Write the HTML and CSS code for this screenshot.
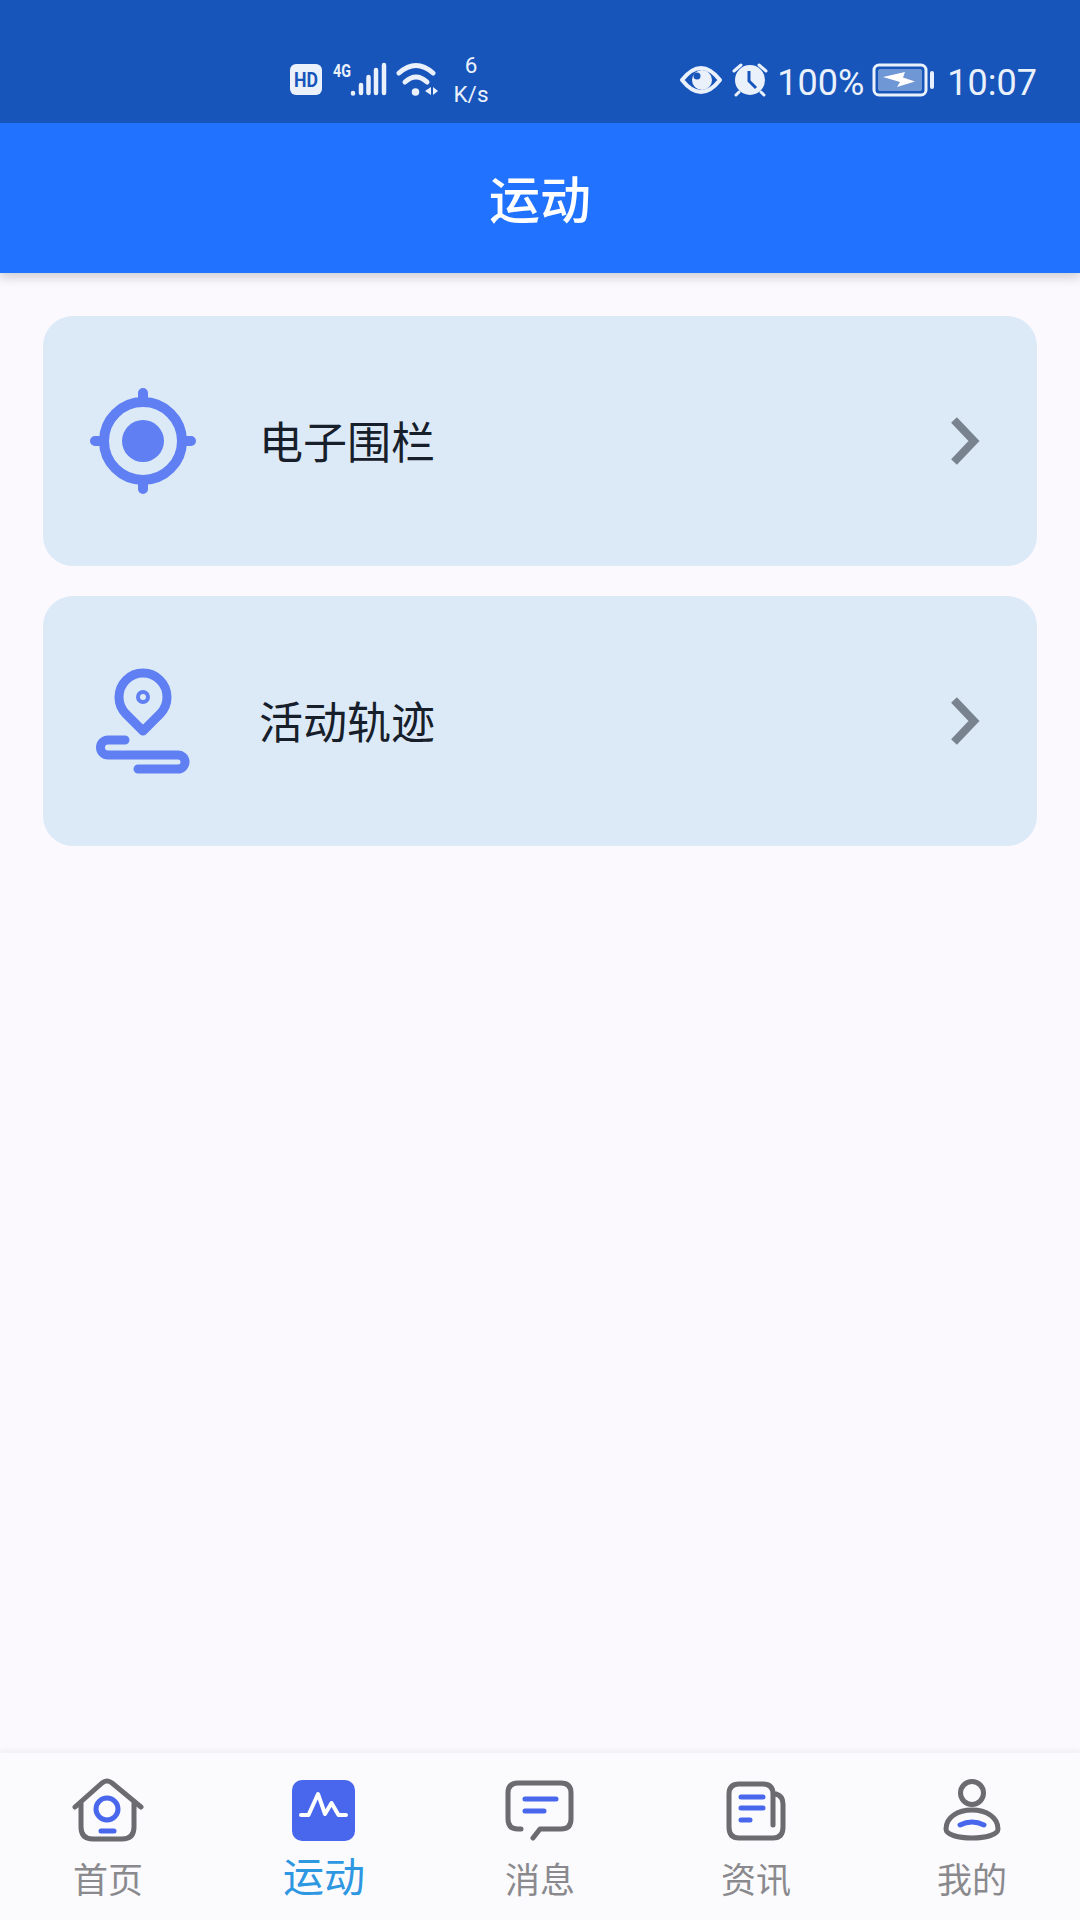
FILE: index.html
```html
<!DOCTYPE html>
<html lang="zh">
<head>
<meta charset="utf-8">
<title>运动</title>
<link rel="stylesheet" href="styles.css">
</head>
<body>
<div class="screen">
  <header class="header">
    <div class="status">
      <div class="status-left">
        <svg class="ic" width="32" height="32" viewBox="290 65 32 32"><rect x="290" y="65" width="32" height="31" rx="6" fill="#EAF1FB"/><text x="294" y="88" class="hd" textLength="24" lengthAdjust="spacingAndGlyphs">HD</text></svg>
        <svg class="ic net" width="54" height="44" viewBox="333 58 54 44"><text x="333" y="77" class="g4" textLength="18" lengthAdjust="spacingAndGlyphs">4G</text><g stroke="#EAF1FB" stroke-width="4.500" stroke-linecap="round"><path d="M353 93v.5M361 85v8M368.500 77v16M376 70v23M384 65v28"/></g></svg>
        <svg class="ic wifi" width="44" height="36" viewBox="395 62 44 36"><g fill="none" stroke="#EAF1FB" stroke-width="5" stroke-linecap="round"><path d="M399 73Q416 58 433 73"/><path d="M405 82Q416 72 427 82"/></g><circle cx="415.500" cy="92" r="3.800" fill="#EAF1FB"/><path d="M431 87v8l-6-4zM433 87v8l5-4z" fill="#EAF1FB"/></svg>
        <div class="speed"><span>6</span><span>K/s</span></div>
      </div>
      <div class="status-right">
        <svg class="ic" width="44" height="30" viewBox="679 64 44 30"><path d="M682 79Q701 55 720 79Q701 103 682 79Z" fill="none" stroke="#EAF1FB" stroke-width="4" stroke-linejoin="round"/><circle cx="702" cy="79" r="10" fill="#EAF1FB"/><circle cx="697" cy="75" r="3.500" fill="#1755BB"/></svg>
        <svg class="ic alarm" width="36" height="36" viewBox="733 62 36 36"><circle cx="751" cy="80" r="15" fill="#EAF1FB"/><path d="M750 71v10l7 7" fill="none" stroke="#1755BB" stroke-width="3"/><g stroke="#EAF1FB" stroke-width="3" stroke-linecap="round"><path d="M735 71l7-6M767 71l-7-6M737 95l3-3M765 95l-3-3"/></g></svg>
        <span class="pct">100%</span>
        <svg class="ic batt" width="64" height="34" viewBox="872 64 64 34"><rect x="874" y="66" width="52" height="30" rx="5" fill="none" stroke="#EAF1FB" stroke-width="3"/><rect x="878" y="70" width="44" height="22" rx="2" fill="#EAF1FB" fill-opacity=".42"/><path d="M883 78L905 73L903 78.500L915 82.500L897 88L900 83Z" fill="#fff"/><rect x="930" y="72" width="4" height="18" rx="2" fill="#EAF1FB"/></svg>
        <span class="time">10:07</span>
      </div>
    </div>
    <div class="appbar">运动</div>
  </header>

  <main class="list">
    <div class="card">
      <svg class="card-icon" width="120" height="120" viewBox="83 381 120 120">
        <g fill="none" stroke="#5F7FF2" stroke-width="10" stroke-linecap="round">
          <circle cx="143" cy="441" r="39"/>
          <path d="M143 393v5M143 484v5M95 441h5M186 441h5"/>
        </g>
        <circle cx="143" cy="441" r="21" fill="#5F7FF2"/>
      </svg>
      <span class="card-label">电子围栏</span>
      <svg class="chev" width="36" height="52" viewBox="0 0 36 52"><path d="M7 5L27 26L7 47" fill="none" stroke="#78838F" stroke-width="8"/></svg>
    </div>
    <div class="card">
      <svg class="card-icon" width="120" height="120" viewBox="83 661 120 120">
        <g fill="none" stroke="#5F7FF2" stroke-linecap="round" stroke-linejoin="round">
          <path stroke-width="9" d="M143 731L126 714A24 24 0 1 1 160 714Z"/>
          <circle cx="143" cy="697" r="5" stroke-width="4"/>
          <path stroke-width="9" d="M125 740H108A7.500 7.500 0 0 0 108 755H178A7 7 0 0 1 178 769H138"/>
        </g>
      </svg>
      <span class="card-label">活动轨迹</span>
      <svg class="chev" width="36" height="52" viewBox="0 0 36 52"><path d="M7 5L27 26L7 47" fill="none" stroke="#78838F" stroke-width="8"/></svg>
    </div>
  </main>

  <nav class="tabs">
    <div class="tab">
      <svg class="tab-icon" width="80" height="66" viewBox="68 1777 80 66">
        <path d="M75 1807L102 1783Q107 1779 112 1783L141 1807M81 1802V1827Q81 1839 93 1839H122Q134 1839 134 1827V1802" fill="none" stroke="#6B6B70" stroke-width="5" stroke-linecap="round" stroke-linejoin="round"/>
        <circle cx="107" cy="1809" r="11" fill="none" stroke="#4867EC" stroke-width="5"/>
        <path d="M101 1831H114" stroke="#4867EC" stroke-width="5" stroke-linecap="round"/>
      </svg>
      <span class="tab-label">首页</span>
    </div>
    <div class="tab">
      <svg class="tab-icon" width="80" height="66" viewBox="284 1777 80 66">
        <rect x="292" y="1780" width="63" height="61" rx="10" fill="#4867EC"/>
        <path d="M301 1815H308.500L318 1794L325 1814L331.500 1803L338.500 1815H346" fill="none" stroke="#fff" stroke-width="4" stroke-linecap="round" stroke-linejoin="round"/>
      </svg>
      <span class="tab-label active">运动</span>
    </div>
    <div class="tab">
      <svg class="tab-icon" width="80" height="66" viewBox="500 1777 80 66">
        <path d="M521 1829H518Q508 1829 508 1819V1793Q508 1783 518 1783H561Q571 1783 571 1793V1819Q571 1829 561 1829H540L533 1838" fill="none" stroke="#6B6B70" stroke-width="5" stroke-linecap="round" stroke-linejoin="round"/>
        <path d="M525 1799H556M525 1811H544" stroke="#4867EC" stroke-width="5" stroke-linecap="round"/>
      </svg>
      <span class="tab-label">消息</span>
    </div>
    <div class="tab">
      <svg class="tab-icon" width="80" height="66" viewBox="716 1777 80 66">
        <path d="M773 1825V1794Q773 1784 763 1784H739Q729 1784 729 1794V1827Q729 1838 739 1838H773Q783 1838 783 1827V1804Q783 1796 776 1794" fill="none" stroke="#6B6B70" stroke-width="5" stroke-linecap="round" stroke-linejoin="round"/>
        <path d="M741 1797H763M741 1808H763M741 1820H750" stroke="#4867EC" stroke-width="5" stroke-linecap="round"/>
      </svg>
      <span class="tab-label">资讯</span>
    </div>
    <div class="tab">
      <svg class="tab-icon" width="80" height="66" viewBox="932 1777 80 66">
        <circle cx="972" cy="1793" r="11.500" fill="none" stroke="#6B6B70" stroke-width="5"/>
        <path d="M946 1829C946 1817 958 1810 972 1810C986 1810 998 1817 998 1829C998 1835 985 1838 972 1838C959 1838 946 1835 946 1829Z" fill="none" stroke="#6B6B70" stroke-width="5"/>
        <path d="M960 1825Q972 1819 984 1825" fill="none" stroke="#4867EC" stroke-width="5" stroke-linecap="round"/>
      </svg>
      <span class="tab-label">我的</span>
    </div>
  </nav>
</div>
</body>
</html>
```

FILE: styles.css
```css
* { box-sizing: border-box; }
html, body { margin: 0; padding: 0; }
body { font-family: "Noto Sans CJK SC", "Noto Sans", sans-serif; background: #FBF9FD; }
.screen { width: 1080px; height: 1920px; display: flex; flex-direction: column; overflow: hidden; background: #FBF9FD; }

.header { flex: none; box-shadow: 0 4px 10px rgba(60, 60, 70, .24); position: relative; z-index: 1; }
.status { height: 123px; background: #1755BB; display: flex; align-items: center; justify-content: space-between; padding: 37px 43px 0 290px; color: #EAF1FB; font-family: Roboto, sans-serif; }
.status-left, .status-right { display: flex; align-items: center; height: 44px; }
.ic { display: block; flex: none; }
.net { margin-left: 11px; }
.wifi { margin-left: 8px; }
.alarm { margin-left: 9px; }
.batt { margin-left: 8px; }
.hd { font: 700 21px Roboto, sans-serif; fill: #1755BB; }
.g4 { font: 700 18px Roboto, sans-serif; fill: #EAF1FB; }
.speed { margin-left: 13px; width: 38px; display: flex; flex-direction: column; align-items: center; font-size: 22.500px; line-height: 29px; font-weight: 400; }
.pct { margin-left: 9px; padding-top: 5px; font-size: 36px; line-height: 36px; font-weight: 400; }
.time { margin-left: 11px; padding-top: 5px; font-size: 36px; line-height: 36px; font-weight: 400; }

.appbar { height: 150px; background: #2072FF; color: #fff; display: flex; align-items: center; justify-content: center; font-size: 51px; font-weight: 500; padding-bottom: 2px; }

.list { flex: 1; display: flex; flex-direction: column; gap: 30px; padding: 43px 43px 0; }
.card { height: 250px; border-radius: 30px; background: #DCEAF8; display: flex; align-items: center; padding: 0 54px 0 40px; }
.card-icon { flex: none; display: block; }
.card-label { flex: 1; margin-left: 56px; padding-bottom: 1px; font-size: 44px; color: #17202A; line-height: 1.2; }
.chev { flex: none; display: block; }

.tabs { flex: none; height: 167px; background: #FBFAFD; display: grid; grid-template-columns: repeat(5, 216px); box-shadow: 0 -3px 5px rgba(60, 60, 70, .05); }
.tab { display: flex; flex-direction: column; align-items: center; padding-top: 24px; }
.tab-icon { display: block; flex: none; }
.tab-label { margin-top: 11px; font-size: 35px; line-height: 48px; color: #8A8A8E; }
.tab-label.active { font-size: 41px; color: #2E97E2; margin-top: 5px; line-height: 52px; }
```
